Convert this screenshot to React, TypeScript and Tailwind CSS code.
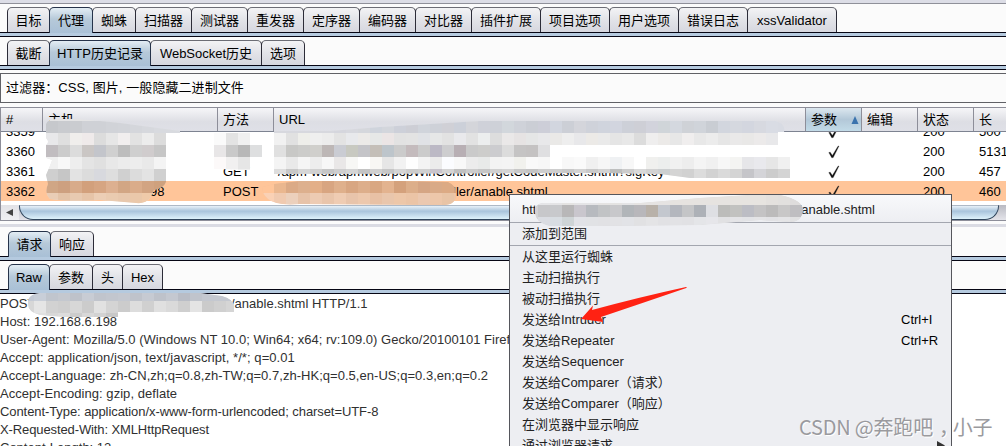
import clsx from "clsx";

interface TabItem {
  label: string;
  width: string;
}

interface HistoryRow {
  id: string;
  method: string;
  url: string;
  status: string;
  length: string;
  selected?: boolean;
}

interface MenuEntry {
  label: string;
  shortcut?: string;
  submenu?: boolean;
}

const mainTabs: TabItem[] = [
  { label: "目标", width: "w-[43px]" },
  { label: "代理", width: "w-[44px]" },
  { label: "蜘蛛", width: "w-[44px]" },
  { label: "扫描器", width: "w-[57px]" },
  { label: "测试器", width: "w-[57px]" },
  { label: "重发器", width: "w-[57px]" },
  { label: "定序器", width: "w-[57px]" },
  { label: "编码器", width: "w-[57px]" },
  { label: "对比器", width: "w-[57px]" },
  { label: "插件扩展", width: "w-[70px]" },
  { label: "项目选项", width: "w-[70px]" },
  { label: "用户选项", width: "w-[70px]" },
  { label: "错误日志", width: "w-[70px]" },
  { label: "xssValidator", width: "w-[90px]" },
];

const proxyTabs: TabItem[] = [
  { label: "截断", width: "w-[43px]" },
  { label: "HTTP历史记录", width: "w-[102px]" },
  { label: "WebSocket历史", width: "w-[112px]" },
  { label: "选项", width: "w-[44px]" },
];

const messageTabs: TabItem[] = [
  { label: "请求", width: "w-[43px]" },
  { label: "响应", width: "w-[44px]" },
];

const viewTabs: TabItem[] = [
  { label: "Raw", width: "w-[42px]" },
  { label: "参数", width: "w-[44px]" },
  { label: "头", width: "w-[31px]" },
  { label: "Hex", width: "w-[41px]" },
];

const rows: HistoryRow[] = [
  { id: "3359", method: "", url: "", status: "200", length: "500" },
  { id: "3360", method: "", url: "", status: "200", length: "5131" },
  {
    id: "3361",
    method: "GET",
    url: "/apm-web/apmweb/popWinController/getCodeMaster.shtml?sigKey=",
    status: "200",
    length: "457",
  },
  { id: "3362", method: "POST", url: "ller/anable.shtml", status: "200", length: "460", selected: true },
];

const requestLines = [
  { text: "Host: 192.168.6.198", spacing: "tracking-normal" },
  {
    text: "User-Agent: Mozilla/5.0 (Windows NT 10.0; Win64; x64; rv:109.0) Gecko/20100101 Firefox/113.0",
    spacing: "tracking-[0.02px]",
  },
  { text: "Accept: application/json, text/javascript, */*; q=0.01", spacing: "tracking-[0.06px]" },
  {
    text: "Accept-Language: zh-CN,zh;q=0.8,zh-TW;q=0.7,zh-HK;q=0.5,en-US;q=0.3,en;q=0.2",
    spacing: "tracking-[0.03px]",
  },
  { text: "Accept-Encoding: gzip, deflate", spacing: "tracking-[0.05px]" },
  { text: "Content-Type: application/x-www-form-urlencoded; charset=UTF-8", spacing: "tracking-[-0.08px]" },
  { text: "X-Requested-With: XMLHttpRequest", spacing: "tracking-[-0.11px]" },
  { text: "Content-Length: 12", spacing: "tracking-normal" },
];

const menuEntries: MenuEntry[] = [
  { label: "从这里运行蜘蛛" },
  { label: "主动扫描执行" },
  { label: "被动扫描执行" },
  { label: "发送给Intruder", shortcut: "Ctrl+I" },
  { label: "发送给Repeater", shortcut: "Ctrl+R" },
  { label: "发送给Sequencer" },
  { label: "发送给Comparer（请求）" },
  { label: "发送给Comparer（响应）" },
  { label: "在浏览器中显示响应" },
  { label: "通过浏览器请求", submenu: true },
];

function TabBar({ tabs, active, inset = "pl-[7px]" }: { tabs: TabItem[]; active: number; inset?: string }) {
  return (
    <div className="h-[30px] shrink-0">
      <div className={clsx("flex h-[25px]", inset)}>
        {tabs.map((tab, i) => (
          <div
            key={tab.label}
            className={clsx(
              "relative flex h-[25px] shrink-0 items-center justify-center rounded-t-[5px] border border-b-0 pt-px whitespace-nowrap",
              i > 0 && "-ml-px",
              i === active
                ? "z-10 h-[26px] border-[#26334a] bg-linear-to-b from-[#e3edf4] via-[#b6c9d9] via-45% to-[#a9c0d6]"
                : "border-[#2c2c38] border-t-[#6c6d75] bg-linear-to-b from-[#f3f3f5] via-[#e2e3e8] to-[#d6d7df]",
              tab.width
            )}
          >
            {tab.label}
          </div>
        ))}
      </div>
      <div className="h-[5px] border-y border-[#060614] bg-[#b5cadf]" />
    </div>
  );
}

function CheckMark() {
  return (
    <svg width="12" height="14" viewBox="0 0 12 14" fill="none">
      <path d="M0.8 7.6 L2.2 7.2 L4.4 10.4 L10 1.2 L11 1 L5.2 12.6 L3.8 12.8 Z" fill="#111" stroke="#111" strokeWidth="0.3" />
    </svg>
  );
}

function HistoryTable() {
  const grid = "grid grid-cols-[41px_175px_56px_532px_56px_56px_56px_60px]";
  const cell = "flex items-center border-l border-[#8d8e99] pl-[5px]";
  return (
    <div className="h-[114px] shrink-0 overflow-hidden border-y border-l border-[#8d8e99] bg-white">
      <div
        className={clsx(
          grid,
          "h-6 border-b border-[#7d8391] bg-linear-to-b from-[#f6f6f8] via-[#dddee4] via-60% to-[#dfe0e7]"
        )}
      >
        <div className="flex items-center pl-[5px]">#</div>
        <div className={cell}>主机</div>
        <div className={cell}>方法</div>
        <div className={cell}>URL</div>
        <div className={clsx(cell, "bg-linear-to-b from-[#dce7ef] via-[#b3c8d8] to-[#c2dbe8]")}>
          参数
          <svg className="ml-3.5" width="8" height="8" viewBox="0 0 8 8">
            <path d="M4 0 L7.5 8 H0.5 Z" fill="#3a73ad" />
          </svg>
        </div>
        <div className={cell}>编辑</div>
        <div className={cell}>状态</div>
        <div className={cell}>长</div>
      </div>
      <div className="flex h-[69px] flex-col justify-end overflow-hidden">
        {rows.map((row) => (
          <div key={row.id} className={clsx(grid, "h-5 shrink-0 items-center pt-px", row.selected && "bg-[#ffc599]")}>
            <div className="pl-[5px]">{row.id}</div>
            <div className="pl-[108px]">{row.selected && "98"}</div>
            <div className="pl-[6px]">{row.method}</div>
            <div className={row.selected ? "pl-[180px]" : "pl-[5px]"}>{row.url}</div>
            <div className="flex justify-center pl-0.5">
              <CheckMark />
            </div>
            <div />
            <div className="pl-[6px]">{row.status}</div>
            <div className="pl-[6px]">{row.length}</div>
          </div>
        ))}
      </div>
      <div className="mt-1 flex h-[15px] bg-linear-to-b from-[#b9bac2] to-[#e4e4ea]">
        <div className="flex w-[18px] items-center bg-linear-to-b from-[#e2e2e6] to-[#f0f0f3] pl-[5px]">
          <svg width="7" height="7" viewBox="0 0 7 7">
            <path d="M0 3.5 L7 0 V7 Z" fill="#444" />
          </svg>
        </div>
        <div className="w-[980px] rounded-b-[14px] border border-t-[#aeb9c6] border-[#31475e] bg-linear-to-b from-[#e8f1f8] via-[#a9c4dc] via-40% to-[#def2fb]" />
      </div>
    </div>
  );
}

function ContextMenu() {
  return (
    <div className="absolute top-[194px] left-[509px] h-[260px] w-[443px] border border-[#55565c] bg-[#edeef2] text-[#222]">
      <div className="flex h-[27px] items-center bg-linear-to-b from-[#f8f9fb] to-[#edeef2] pt-[3px] pl-3">
        <span>http</span>
        <span className="pl-[254px]">/anable.shtml</span>
      </div>
      <div className="flex h-6 items-center border-y border-[#a3a6af] pl-3">添加到范围</div>
      {menuEntries.map((entry) => (
        <div key={entry.label} className="flex h-[21px] items-center pl-3 leading-[16px]">
          <span className="grow">{entry.label}</span>
          {entry.shortcut && <span className="w-[50px] text-black">{entry.shortcut}</span>}
          {entry.submenu && (
            <svg className="mr-1.5" width="8" height="9" viewBox="0 0 8 9">
              <path d="M0 0 L8 4.5 L0 9 Z" fill="#333" />
            </svg>
          )}
        </div>
      ))}
    </div>
  );
}

interface Patch {
  id: string;
  x: number;
  y: number;
  base: string;
  clip: string;
  cells: string[];
}

// each string is one line of 12px blocks
const patches: Patch[] = [
  {
    id: "host",
    x: 46,
    y: 121,
    base: "#e4e4e5",
    clip: "M46 124 Q48 119 56 119 L80 119 L120 123 L180 131 V133 H166 V182 Q164 188 154 190 L150 198 Q146 204 136 203 L100 200 Q70 202 50 199 Q44 193 48 184 L46 175 Q50 166 52 160 L46 158 V145 Q50 142 46 138 Z",
    cells: [
      "c6c8cc c9cbcf caccd0 cfd1d6 cfd1d6 d1d3d8 d2d4d9 d4d6db d6d8dd d8dadf d8dadf d8dadf",
      "e8e8ea dfdfdf f0eeec efeaea dcdcdc e6e6e6 f1eeee e2e2e2 ececec dcdcdc",
      "c1bdc0 cccccc dcdcdc cac6c4 c3c5cb d0d0d0 bdbdbd cfcfcf d0cccd c6c6c6",
      "f0f0f0 f8f8f8 eeeeee e4e4e4 e0e0e0 e8e8e8 ececec ededed e9e9e9 f4f4f4",
      "cfcfcf c6c6c6 e3e3e3 dcdcdc d8d9de dedede d0d0d0 dcdcdc e3e3e3 d0d0d0",
      "d0a685 cda080 d8ab8a d2a07c d6a582 ddb090 d2a684 daac8a d2a482 cfa17d",
      "e9cdb6 e3c3a8 e8cab1 e6c4a8 ecceb5 eacbb0 e8c8ad eac8aa efcaa9 ffc599",
    ],
  },
  {
    id: "method",
    x: 214,
    y: 133,
    base: "#ffffff",
    clip: "M214 133 H250 V145 H262 V157 H250 V170 H236 L222 169 H214 Z",
    cells: ["fafafa e3e3e3 f0f0f0 ffffff", "e8e6e7 c9c9c9 b8b8b8 dedfe0", "fcf9f9 f1f0f0 e6e6e6 ffffff", "fcfcfc f8f8f8 f0f0f0"],
  },
  {
    id: "url",
    x: 274,
    y: 121,
    base: "#e8e8ea",
    clip: "M274 131 H330 L380 127 L430 124 L480 121 H776 Q786 124 784 132 H778 V145 H550 V157 H790 V178 H690 L660 174 L600 173 L274 174 Z",
    cells: [
      "d7d8de d7d8de d7d8de d7d8de d7d8de d5d6dd d7d8de d5d7dc cfd4dc d3d6dc cdd0d9 cdced5 d0d4db ced1d8 d0d0d6 ccd0d9 d4d5da cfd1d9 ced1d8 d2d7dc cfd2d9 cbced5 cdced8 d2d6df cccfd6 d4d5db cfd2da d0d4dd d2d5df cdd0d8 cecfd6 d2d3dc d0d5d9 d4d8df cfd2d7 d0d4da c9cdd3 d2d6de d5d8df d3d6df d7d9e0 d9dce4 d8dbe3",
      "f1f1f1 e1e1e1 eeeeea efefef ececec e3e3e3 e8e9ec eceae8 e6e8e7 ebe5e5 e2e2e2 e3e3e3 e0e2e6 e6e7e7 e2e2e2 e9e9ec e2e2e2 eceeee dddddd eae8e8 e6e3e3 e5e6e6 e8e8ea eae9e7 eeeeee e8e8ea eceae7 eaeaea e5e5e5 e8e8e8 dcdcdc efeeee eceae8 e7e7e7 f0eeee e8e8e8 ececec e6e6e6 eae9e9 e9e8e7 eceaea e8e8ea",
      "e0e0e0 c8c8c6 ccccca d0cfcc bdb7b6 caccd3 c8c9c1 c4c4c8 c4bfb8 bdc5cb cbcbcb c4bbbd cbcbcb bcb9c5 cdcdcf b8afb4 cacaca cdcdcb cccccf dcdcdc c5c4c4 c4c2c2 dfdfe1",
      "f4f4f4 e9e9e9 f5f5f5 ededed f7f7f7 e9e7e7 f7f7f5 ffffff f8f7f4 e6e6e6 f2f2f2 fefefe f3f3f3 ebebeb fbfcff f8f8f8 ececec e8eae9 f3f3f3 f4f4f4 f1f1ed f9f9f9 f7f7f7 ffffff f8f8f8 fafafa f0f0f0 f6f6f6 eff1f3 f7f7f7 ffffff f0f0ee eceeed f1f1f1 ededed f4f4f4 f0f0f0 f7f7f7 f4f4f2 e6e6e9 e9e9ed e6e6e6 f0f0f0",
      "dddddd c8c8c8 d6d6d6 d0d0d0 c6c6c6 cecece d4d4d4 c4c4c4 d0d0d0 c7c7c7 d5d5d5 cccccc d0d0d0 c8c4cc d4d4d4 c0c0c0 cccccc c6c6c6 d0d0d0 d4d4d4 c8c8c8 c4c4c4 cecece cecece c9c9c9 d3d3d3 c9c9c9 d2d2d2 bdbfbf cccccc d9d9d9 d2d2d2 cccfd0 d4d4d4 d1d1d1 dcdcdc d2d2d2 dadada d4d4d4 c5c5c9 d4d4d8 cccccc d4d4d4",
    ],
  },
  {
    id: "selected-url",
    x: 262,
    y: 181,
    base: "#e8bd9c",
    clip: "M262 187 L274 184 L300 181 H400 L448 182 Q456 185 456 194 Q456 205 444 205 L300 204 Q276 206 268 199 Q262 194 262 187 Z",
    cells: [
      "ffc599 eab78f dbaa86 ddb08e e3af88 d8a581 dfb08c d8a682 ddae8b d9a782 e3b38f d4a17c dcae8a d5a584 d9aa87 dcaa84 d3a17e",
      "fad1b5 f0cab0 ecd0bc e7c3a9 edcbb3 e9c5ab efccb3 e8c4ab edc8ad e8c1a5 e9c6ac edc7a9 ebc4a6 ebc8b0 edc7aa e8c4a6 edc5a7",
    ],
  },
  {
    id: "menu-url",
    x: 538,
    y: 193,
    base: "#d4d3d5",
    clip: "M535 207 Q538 203 544 203 H640 L700 198 L750 195 H780 Q803 200 803 210 Q802 222 790 222 L760 220 L700 225 L600 226 L550 226 Q535 222 535 213 Z",
    cells: [
      "e5e5e8 e4e4e6 e4e3e2 e4e4e6 e4e4e6 e4e3e2 e4e3e2 e4e4e6 e5e3e2 e5e3e2 e5e3e2 e6e3e0 e6e3e0 e6e3e0 e6e3e0 e6e3e0 e7e4e0 e7e4e0 e7e4e0 e4e1de e2e0de dedcdc",
      "c7c7ca c8c9cc b8b7b8 c9c6cd b7babf c1c3c5 c8c8cb b1b5b9 b8b7bb b8b1a9 c3c7ce b4b7be c4c5c7 adb1b7 dedfe3 bcbcba c2c2c0 bcbdc4 c4c3c4 bcbbbb c8c7c7 bfbec1 bcbcbe",
      "dadce2 d8dde2 ced4d6 e1e2e7 e1e2e5 e1e1e4 e2e2e5 e2e3e7 e1e1e3 e4e4e6 e1e1e4 e2e2e5 e1e1e4 e4e5e8 e6e6ea e1e1e3 e4e4e7 e2e3e6 e4e4e6 e2e2e5 e4e4e6 e1e1e2 dfdfe2",
    ],
  },
  {
    id: "post-line",
    x: 22,
    y: 289,
    base: "#dddddd",
    clip: "M28 300 Q30 294 40 293 H200 L222 296 Q233 299 234 306 V312 H118 V317 H64 L40 315 Q28 312 28 304 Z",
    cells: [
      "c4cad5 c8ced8 c0c5cd c4c8cf bec2ca c8ccd4 c0c4cc c2c6ce c4c8d0 bfc3cb c6cad2 bec2ca c4c8d0 b9bdc6 c0c4cc c4c8d0 c4c8d0 c4c8d0",
      "d7d7d7 e5e5e5 d2d2d2 cfcfcf d7d7d7 cccccc e1e1e1 d4d4d4 cccccc dddddd d0d0d0 e0e0e0 dadada cfcfcf e4e4e4 cbcbcb d0d0d0 d5d5d5",
      "e2e2e2 e0e0e0 d8d8d8 dcdcdc cccccc d8d8d8 d2d2d2 c8c8c8 dddddd",
    ],
  },
];

function MosaicPatch({ id, x, y, base, clip, cells }: Patch) {
  return (
    <g clipPath={`url(#clip-${id})`}>
      <clipPath id={`clip-${id}`}>
        <path d={clip} />
      </clipPath>
      <path d={clip} fill={base} />
      {cells.map((line, r) =>
        line
          .split(" ")
          .map((color, c) => (
            <rect
              key={`${r}-${c}`}
              x={x + c * 12}
              y={y + r * 12}
              width="12"
              height="12"
              fill={`#${color}`}
              shapeRendering="crispEdges"
            />
          ))
      )}
    </g>
  );
}

function Annotations() {
  return (
    <svg className="pointer-events-none absolute inset-0" width="1006" height="446" viewBox="0 0 1006 446">
      {patches.map((patch) => (
        <MosaicPatch key={patch.id} {...patch} />
      ))}
      <path d="M581 319 L593 305.5 L592 310 Q640 297 686 287 L687 287.8 Q640 304 601 317 L603 322 Z" fill="#ff2213" />
    </svg>
  );
}

export default function App() {
  return (
    <div className="relative flex h-[446px] w-[1006px] flex-col overflow-hidden bg-[#fbfbfb] font-['Liberation_Sans','Noto_Sans_CJK_SC',sans-serif] text-[13px] leading-[18px] text-black">
      <div className="mb-[3px] h-1 shrink-0 border-b border-[#8f9099] bg-[#dcdde6]" />
      <TabBar tabs={mainTabs} active={1} />
      <div className="h-[3px] shrink-0" />
      <TabBar tabs={proxyTabs} active={1} />
      <div className="mt-[3px] mb-1 flex h-[30px] shrink-0 items-center border border-r-0 border-[#606166] pl-[5px] tracking-[0.08px]">
        过滤器：CSS, 图片, 一般隐藏二进制文件
      </div>
      <HistoryTable />
      <div className="mt-[3px] mb-1 h-[3px] shrink-0 bg-[#dadbe3]" />
      <TabBar tabs={messageTabs} active={0} inset="pl-2" />
      <div className="h-[3px] shrink-0" />
      <TabBar tabs={viewTabs} active={0} inset="pl-2" />
      <div className="grow bg-white pt-px whitespace-pre text-[#303030]">
        <div className="flex h-[18px] items-center">
          <span className="w-[231px]">POST</span>
          <span>/anable.shtml HTTP/1.1</span>
        </div>
        {requestLines.map((line) => (
          <div key={line.text} className={clsx("h-[18px]", line.spacing)}>
            {line.text}
          </div>
        ))}
      </div>
      <ContextMenu />
      <Annotations />
      <div className="absolute top-[412px] left-[799px] font-['Noto_Sans_CJK_SC',sans-serif] text-[20px] leading-[30px] tracking-[-0.2px] whitespace-nowrap text-[#9a9a9e] [text-shadow:1px_1px_0_#ffffff]">
        CSDN @奔跑吧<span className="-mr-1.5 pl-1.5">，</span>小子
      </div>
    </div>
  );
}
